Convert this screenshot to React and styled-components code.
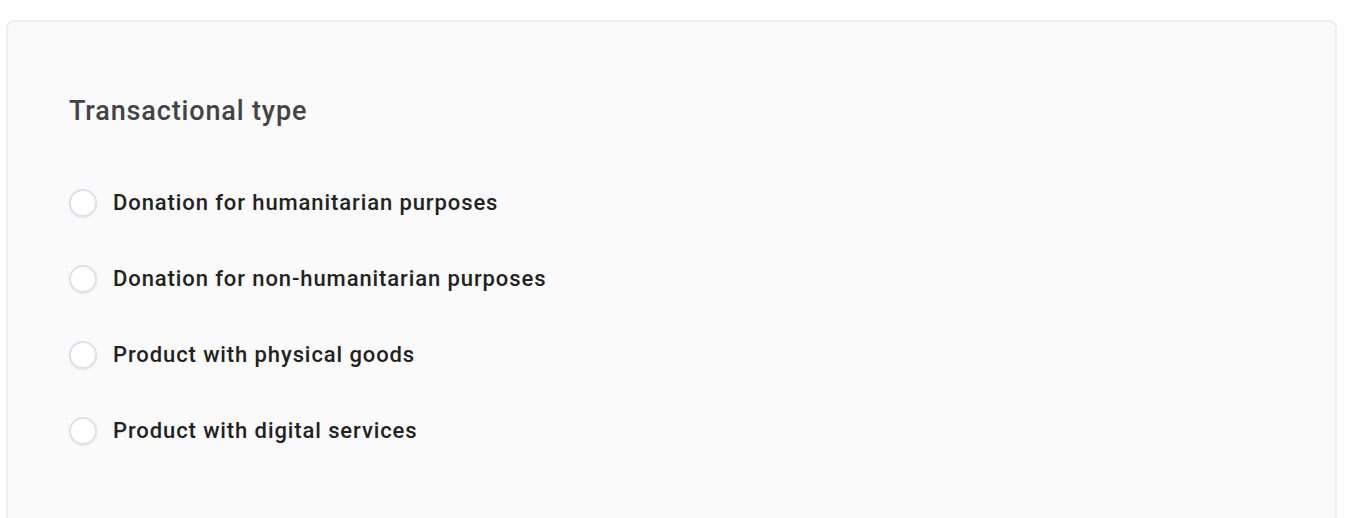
import React, { useState } from 'react'
import styled, { createGlobalStyle } from 'styled-components'

const GlobalStyle = createGlobalStyle`
  body {
    margin: 0;
    background: #ffffff;
    font-family: Roboto, "Liberation Sans", sans-serif;
  }
`

const Page = styled.div`
  padding: 20px 29px 0 6px;
  height: 518px;
  box-sizing: border-box;
  overflow: hidden;
`

const Card = styled.div`
  background: #fafafa;
  border: 2px solid #ededf2;
  border-radius: 8px;
  padding: 71px 61px 100px;
  min-height: 560px;
  box-sizing: border-box;
`

const Title = styled.h2`
  margin: 0 0 60px;
  font-size: 27px;
  line-height: 36px;
  font-weight: 500;
  letter-spacing: 0.85px;
  color: #444444;
`

const List = styled.div`
  display: flex;
  flex-direction: column;
  gap: 48px;
`

const Option = styled.label`
  display: flex;
  align-items: center;
  gap: 16px;
  cursor: pointer;
  font-size: 22px;
  line-height: 28px;
  font-weight: 500;
  letter-spacing: 0.9px;
  color: #222222;
`

const Circle = styled.span`
  width: 28px;
  height: 28px;
  border-radius: 50%;
  box-sizing: border-box;
  border: 2px solid ${p => (p.checked ? '#3b82f6' : '#e0e0ea')};
  background: #ffffff;
  box-shadow: 0 1px 2px rgba(30, 30, 60, 0.08);
  display: flex;
  align-items: center;
  justify-content: center;
  flex-shrink: 0;

  &::after {
    content: '';
    width: 12px;
    height: 12px;
    border-radius: 50%;
    background: #3b82f6;
    display: ${p => (p.checked ? 'block' : 'none')};
  }
`

const options = [
  'Donation for humanitarian purposes',
  'Donation for non-humanitarian purposes',
  'Product with physical goods',
  'Product with digital services',
]

export default function App() {
  const [selected, setSelected] = useState(null)

  return (
    <Page>
      <GlobalStyle />
      <Card>
        <Title>Transactional type</Title>
        <List>
          {options.map((o, i) => (
            <Option key={i} onClick={() => setSelected(i)}>
              <Circle checked={selected === i} />
              {o}
            </Option>
          ))}
        </List>
      </Card>
    </Page>
  )
}
